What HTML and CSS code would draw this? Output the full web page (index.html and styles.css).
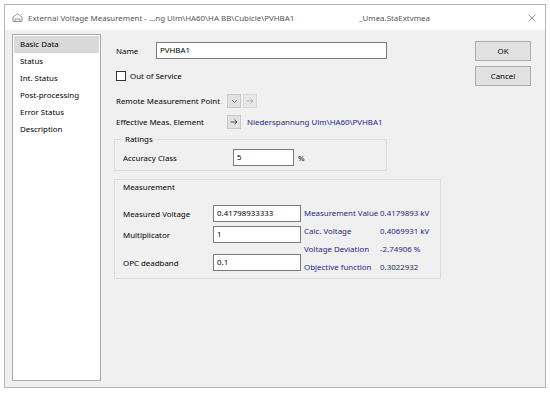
FILE: index.html
```html
<!DOCTYPE html>
<html>
<head>
<meta charset="utf-8">
<link rel="stylesheet" href="styles.css">
</head>
<body>
<div class="window">
  <div class="titlebar">
    <svg class="ticon" width="11" height="9" viewBox="0 0 11 9"><path d="M1 8.5 V4 L5.5 0.8 L10 4 V8.5 Z M3 8.5 V6 H8 V8.5" fill="none" stroke="#8a8a8a" stroke-width="0.9"/></svg>
    <span class="ttext">External Voltage Measurement - ...ng Ulm\HA60\HA BB\Cubicle\PVHBA1</span>
    <span class="tclass">_Umea.StaExtvmea</span>
    <svg class="tclose" width="8" height="8" viewBox="0 0 8 8"><path d="M0.5 0.5 L7.5 7.5 M7.5 0.5 L0.5 7.5" stroke="#777" stroke-width="0.8"/></svg>
  </div>
  <div class="content">
    <ul class="sidebar">
      <li class="active">Basic Data</li>
      <li>Status</li>
      <li>Int. Status</li>
      <li>Post-processing</li>
      <li>Error Status</li>
      <li>Description</li>
    </ul>
    <div class="main">
      <div class="row name-row">
        <span class="lbl name-lbl">Name</span>
        <div class="input name-input">PVHBA1</div>
      </div>
      <div class="row check-row">
        <span class="checkbox"></span>
        <span class="lbl">Out of Service</span>
      </div>
      <div class="row remote-row">
        <span class="lbl wide-lbl">Remote Measurement Point</span>
        <span class="sbtn"><svg width="7" height="5" viewBox="0 0 7 5"><path d="M1 1 L3.5 3.5 L6 1" fill="none" stroke="#555" stroke-width="0.9"/></svg></span>
        <span class="sbtn disabled"><svg width="8" height="6" viewBox="0 0 8 6"><path d="M0.5 3 H7 M4.5 0.8 L7 3 L4.5 5.2" fill="none" stroke="#aaa" stroke-width="0.9"/></svg></span>
      </div>
      <div class="row eff-row">
        <span class="lbl wide-lbl">Effective Meas. Element</span>
        <span class="sbtn"><svg width="8" height="6" viewBox="0 0 8 6"><path d="M0.5 3 H7 M4.5 0.8 L7 3 L4.5 5.2" fill="none" stroke="#444" stroke-width="0.9"/></svg></span>
        <span class="link">Niederspannung Ulm\HA60\PVHBA1</span>
      </div>
      <fieldset class="ratings">
        <legend>Ratings</legend>
        <div class="row acc-row">
          <span class="lbl acc-lbl">Accuracy Class</span>
          <div class="input acc-input">5</div>
          <span class="lbl unit">%</span>
        </div>
      </fieldset>
      <div class="measurement">
        <div class="mhead">Measurement</div>
        <div class="mbody">
          <div class="mcol">
            <div class="row mrow r1"><span class="lbl mlbl">Measured Voltage</span><div class="input minput">0.41798933333</div></div>
            <div class="row mrow r2"><span class="lbl mlbl">Multiplicator</span><div class="input minput">1</div></div>
            <div class="row mrow r3"><span class="lbl mlbl">OPC deadband</span><div class="input minput">0.1</div></div>
          </div>
          <div class="results">
            <div class="res"><span class="rk">Measurement Value</span><span class="rv">0.4179893 kV</span></div>
            <div class="res"><span class="rk">Calc. Voltage</span><span class="rv">0.4069931 kV</span></div>
            <div class="res"><span class="rk">Voltage Deviation</span><span class="rv">-2.74906 %</span></div>
            <div class="res"><span class="rk">Objective function</span><span class="rv">0.3022932</span></div>
          </div>
        </div>
      </div>
    </div>
    <div class="buttons">
      <div class="btn">OK</div>
      <div class="btn">Cancel</div>
    </div>
  </div>
</div>
</body>
</html>
```
FILE: styles.css
```css
* { box-sizing: border-box; }
html, body { margin: 0; padding: 0; background: #ffffff; }
body {
  font-family: "Noto Sans", "Open Sans", sans-serif;
  font-size: 7.9px;
  color: #000000;
  width: 550px;
  height: 394px;
  overflow: hidden;
}
.window {
  margin: 4px 0 0 4px;
  width: 542px;
  height: 384px;
  border: 1px solid #b5b5b5;
  display: flex;
  flex-direction: column;
  background: #f0f0f0;
}
.titlebar {
  height: 25px;
  background: #ffffff;
  display: flex;
  align-items: center;
  padding-left: 7px;
  padding-right: 9px;
  color: #555;
}
.ticon { margin-right: 5px; }
.ttext { width: 331px; white-space: nowrap; }
.tclass { flex: 1; }
.content {
  flex: 1;
  display: flex;
  padding: 4px 14px 6px 7px;
}
.sidebar {
  list-style: none;
  margin: 0;
  padding: 1px;
  width: 89px;
  background: #ffffff;
  border: 1px solid #a8a8a8;
}
.sidebar li {
  height: 17px;
  line-height: 17px;
  padding-left: 6px;
}
.sidebar li.active { background: #d9d9d9; }
.main {
  flex: 1;
  padding-left: 13px;
  padding-top: 8px;
  display: flex;
  flex-direction: column;
}
.row { display: flex; align-items: center; }
.lbl { white-space: nowrap; }
.input {
  background: #ffffff;
  border: 1px solid #7a7a7a;
  height: 17px;
  line-height: 15px;
  padding-left: 3px;
  white-space: nowrap;
}
.name-row { height: 17px; padding-left: 2px; }
.name-lbl { width: 40px; }
.name-input { width: 231px; }
.check-row { margin-top: 11px; padding-left: 2px; height: 11px; }
.checkbox {
  width: 10px; height: 10px;
  border: 1px solid #333;
  background: #fff;
  margin-right: 4px;
}
.remote-row { margin-top: 13px; height: 14px; padding-left: 2px; }
.eff-row { margin-top: 7px; height: 14px; padding-left: 2px; }
.wide-lbl { width: 111px; }
.sbtn {
  width: 14px; height: 14px;
  background: #e1e1e1;
  border: 1px solid #c8c8c8;
  display: flex; align-items: center; justify-content: center;
  margin-right: 2px;
}
.sbtn.disabled { background: #e8e8e8; border-color: #d8d8d8; }
.link { color: #1f2586; margin-left: 4px; }
.ratings {
  margin: 5px 0 0 0;
  width: 273px;
  border: 1px solid #dcdcdc;
  padding: 0 0 5px 8px;
  height: 37px;
}
.ratings legend { padding: 0 2px; margin-left: 0; }
.acc-row { height: 17px; margin-top: 5px; }
.acc-lbl { width: 110px; }
.acc-input { width: 61px; }
.unit { margin-left: 4px; }
.measurement {
  margin-top: 8px;
  width: 327px;
  height: 100px;
  border: 1px solid #dcdcdc;
  padding: 1px 0 0 8px;
}
.mhead { height: 12px; line-height: 12px; }
.mbody { display: flex; margin-top: 12px; }
.mcol { width: 181px; display: flex; flex-direction: column; }
.mrow { height: 17px; }
.r2 { margin-top: 4px; }
.r3 { margin-top: 11px; }
.mlbl { width: 90px; }
.minput { width: 88px; }
.results { display: flex; flex-direction: column; color: #1f2586; margin-top: -1px; }
.res { height: 18px; display: flex; align-items: center; }
.rk { width: 76px; white-space: nowrap; }
.rv { white-space: nowrap; }
.buttons {
  width: 56px;
  padding-top: 7px;
  display: flex;
  flex-direction: column;
  gap: 5px;
}
.btn {
  height: 20px;
  background: #e1e1e1;
  border: 1px solid #adadad;
  display: flex; align-items: center; justify-content: center;
}
```
